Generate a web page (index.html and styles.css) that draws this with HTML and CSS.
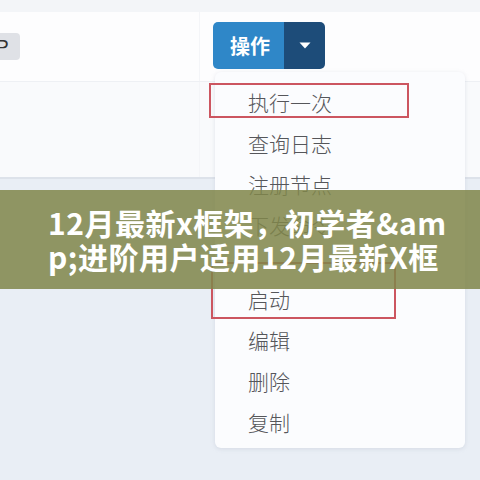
FILE: index.html
```html
<!DOCTYPE html>
<html lang="zh-CN">
<head>
<meta charset="utf-8">
<link rel="stylesheet" href="styles.css">
</head>
<body>
<div class="page">
  <div class="top-strip"></div>
  <div class="row row1">
    <div class="cell cell-left"><span class="tag">P</span></div>
    <div class="cell cell-right">
      <div class="btn-group">
        <span class="btn-main">操作</span>
        <span class="btn-caret"><svg width="12" height="7" viewBox="0 0 12 7"><path d="M0.5 0.5 H11.5 L6 6.5 Z" fill="#ffffff"/></svg></span>
      </div>
    </div>
  </div>
  <div class="row row2">
    <div class="cell cell-left"></div>
    <div class="cell cell-right"></div>
  </div>

  <ul class="menu">
    <li class="item">执行一次</li>
    <li class="item">查询日志</li>
    <li class="item">注册节点</li>
    <li class="item">下发命令</li>
    <li class="divider"></li>
    <li class="item">启动</li>
    <li class="item">编辑</li>
    <li class="item">删除</li>
    <li class="item">复制</li>
  </ul>

  <div class="mark mark1"></div>
  <div class="mark mark2"></div>

  <div class="banner">
    <div class="banner-line">12月最新x框架，初学者&amp;am</div>
    <div class="banner-line">p;进阶用户适用12月最新X框</div>
  </div>
</div>
</body>
</html>
```

FILE: styles.css
```css
html, body {
  margin: 0;
  padding: 0;
}
body {
  width: 480px;
  height: 480px;
  overflow: hidden;
  background: #e9eef5;
  font-family: "Noto Sans CJK SC", "Noto Sans", sans-serif;
}
.page {
  position: relative;
  width: 480px;
  height: 480px;
  overflow: hidden;
}
.top-strip {
  height: 12px;
  background: #f3f5f8;
}
.row {
  display: grid;
  grid-template-columns: 200px 1fr;
}
.row1 {
  height: 69px;
  background: #fdfdfe;
  border-bottom: 1px solid #eef0f4;
}
.row2 {
  height: 95px;
  background: #f9fafc;
  border-bottom: 2px solid #dde2ea;
}
.cell-left {
  border-right: 1px solid #f4f5f8;
  display: flex;
  align-items: center;
}
.cell-right {
  padding: 10px 0 0 13px;
}
.tag {
  display: inline-block;
  margin-left: -4px;
  padding: 0 11px 0 0;
  height: 27px;
  line-height: 27px;
  background: #dfe1e6;
  border-radius: 0 4px 4px 0;
  font-family: "Liberation Sans", Arial, sans-serif;
  font-size: 19px;
  color: #333333;
}
.btn-group {
  display: inline-flex;
  height: 47px;
  border-radius: 5px;
  overflow: hidden;
}
.btn-main {
  width: 71px;
  display: flex;
  align-items: center;
  justify-content: center;
  padding-left: 3px;
  box-sizing: border-box;
  background: #2f87c8;
  color: #ffffff;
  font-weight: 700;
  font-size: 20px;
}
.btn-caret {
  width: 41px;
  display: flex;
  align-items: center;
  justify-content: center;
  background: #1d4c79;
}
.menu {
  position: absolute;
  left: 215px;
  top: 72px;
  width: 250px;
  margin: 0;
  padding: 10px 0 5px 0;
  list-style: none;
  box-sizing: border-box;
  background: #fbfcfe;
  border-radius: 6px;
  box-shadow: 0 1px 4px rgba(150, 160, 180, 0.25);
}
.item {
  height: 41px;
  line-height: 41px;
  padding-left: 33px;
  font-size: 21px;
  font-weight: 300;
  color: #55565a;
}
.divider {
  height: 33px;
}
.mark {
  position: absolute;
  border: 2px solid #cc5660;
  box-sizing: border-box;
}
.mark1 {
  left: 209px;
  top: 83px;
  width: 200px;
  height: 35px;
}
.mark2 {
  left: 211px;
  top: 262px;
  width: 185px;
  height: 57px;
}
.banner {
  position: absolute;
  left: 0;
  top: 190px;
  width: 480px;
  height: 99px;
  box-sizing: border-box;
  padding: 15px 0 0 48px;
  background: rgba(128, 134, 74, 0.86);
}
.banner-line {
  height: 34px;
  line-height: 34px;
  white-space: nowrap;
  font-size: 30px;
  font-weight: 700;
  letter-spacing: 0.5px;
  color: #ffffff;
}
```
